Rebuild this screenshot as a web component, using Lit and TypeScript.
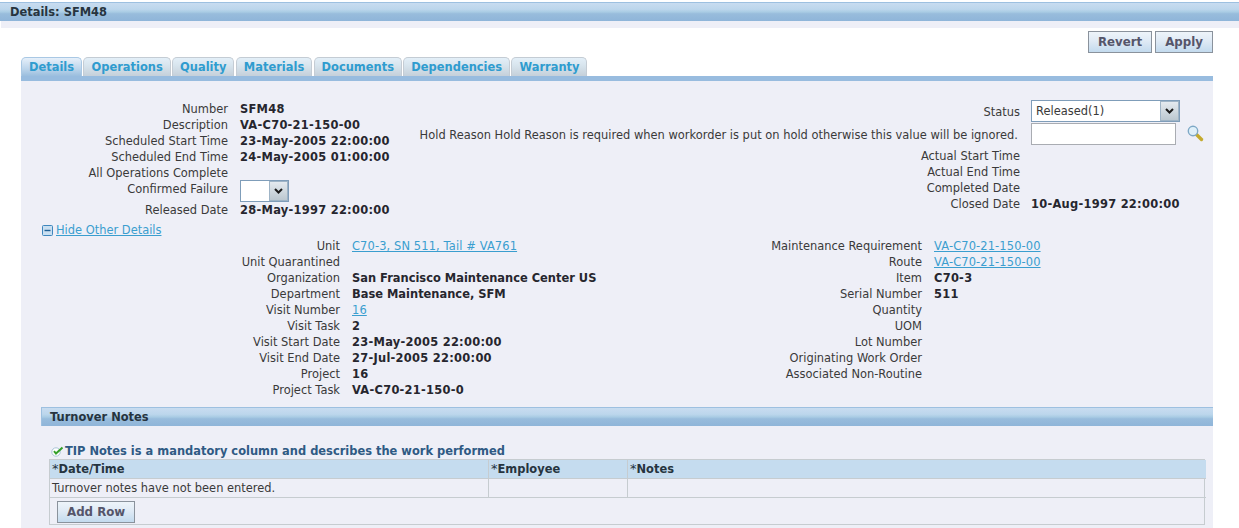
import { LitElement, html, css } from 'lit';
import { customElement } from 'lit/decorators.js';

const tabs = ['Details', 'Operations', 'Quality', 'Materials', 'Documents', 'Dependencies', 'Warranty'];

type Row = [string, string, ('link' | 'plain')?];

const topLeft: Row[] = [
  ['Number', 'SFM48'],
  ['Description', 'VA-C70-21-150-00'],
  ['Scheduled Start Time', '23-May-2005 22:00:00'],
  ['Scheduled End Time', '24-May-2005 01:00:00'],
  ['All Operations Complete', ''],
];

const otherLeft: Row[] = [
  ['Unit', 'C70-3, SN 511, Tail # VA761', 'link'],
  ['Unit Quarantined', ''],
  ['Organization', 'San Francisco Maintenance Center US'],
  ['Department', 'Base Maintenance, SFM'],
  ['Visit Number', '16', 'link'],
  ['Visit Task', '2'],
  ['Visit Start Date', '23-May-2005 22:00:00'],
  ['Visit End Date', '27-Jul-2005 22:00:00'],
  ['Project', '16'],
  ['Project Task', 'VA-C70-21-150-0'],
];

const otherRight: Row[] = [
  ['Maintenance Requirement', 'VA-C70-21-150-00', 'link'],
  ['Route', 'VA-C70-21-150-00', 'link'],
  ['Item', 'C70-3'],
  ['Serial Number', '511'],
  ['Quantity', ''],
  ['UOM', ''],
  ['Lot Number', ''],
  ['Originating Work Order', ''],
  ['Associated Non-Routine', ''],
];

const chevron = html`<svg class="chev" viewBox="0 0 9 6" width="9" height="6"><path d="M1 1l3.5 3.5L8 1" fill="none" stroke="#1c1c1c" stroke-width="2"/></svg>`;

@customElement('app-root')
class AppRoot extends LitElement {
  private _row(r: Row) {
    const num = /\d/.test(r[1]) ? 'num' : '';
    return html`
      <div class="lbl">${r[0]}</div>
      ${r[2] === 'link'
        ? html`<div class="val ${num}"><a>${r[1]}</a></div>`
        : html`<div class="val ${num}">${r[1]}</div>`}
    `;
  }

  render() {
    return html`
      <div class="title">Details: SFM48</div>
      <div class="band"></div>
      <div class="actions">
        <button class="btn">Revert</button>
        <button class="btn">Apply</button>
      </div>
      <div class="tabs">
        ${tabs.map((t, i) => html`<div class="tab ${i == 0 ? 'on' : ''}">${t}</div>`)}
      </div>
      <div class="panel">
        <div class="top">
          <div class="form left-top">
            ${topLeft.map((r) => this._row(r))}
            <div class="lbl">Confirmed Failure</div>
            <div class="val"><div class="select small"><span></span><i>${chevron}</i></div></div>
            ${this._row(['Released Date', '28-May-1997 22:00:00'])}
          </div>
          <div class="form right-top">
            <div class="lbl fld">Status</div>
            <div class="val"><div class="select status"><span>Released(1)</span><i>${chevron}</i></div></div>
            <div class="lbl fld hint">Hold Reason Hold Reason is required when workorder is put on hold otherwise this value will be ignored.</div>
            <div class="val hold">
              <div class="input"></div>
              <svg width="17" height="17" viewBox="0 0 17 17">
                <path d="M9.5 9.5l5 5" stroke="#c4aa2e" stroke-width="3.4" stroke-linecap="round"/>
                <circle cx="6" cy="6" r="4.7" fill="#dff0fa" stroke="#7ea8c6" stroke-width="1.4"/>
              </svg>
            </div>
            ${this._row(['Actual Start Time', ''])}
            ${this._row(['Actual End Time', ''])}
            ${this._row(['Completed Date', ''])}
            ${this._row(['Closed Date', '10-Aug-1997 22:00:00'])}
          </div>
        </div>
        <div class="toggle">
          <svg width="11" height="11" viewBox="0 0 11 11">
            <rect x=".5" y=".5" width="10" height="10" rx="1" fill="#c9dff1" stroke="#3f86bd"/>
            <path d="M2.5 5.5h6" stroke="#1f5f94" stroke-width="1.4"/>
          </svg>
          <a>Hide Other Details</a>
        </div>
        <div class="other">
          <div class="form other-left">${otherLeft.map((r) => this._row(r))}</div>
          <div class="form other-right">${otherRight.map((r) => this._row(r))}</div>
        </div>
        <div class="sub">Turnover Notes</div>
        <div class="tip">
          <svg width="13" height="11" viewBox="0 0 13 11">
            <circle cx="5" cy="6" r="4.2" fill="#fff" stroke="#a9c4d6"/>
            <path d="M3 5.2l2 2.4L11.5 1.5" fill="none" stroke="#35a02a" stroke-width="2"/>
          </svg>
          <span>TIP Notes is a mandatory column and describes the work performed</span>
        </div>
        <div class="table">
          <div class="th"><sup>*</sup>Date/Time</div>
          <div class="th"><sup>*</sup>Employee</div>
          <div class="th last"><sup>*</sup>Notes</div>
          <div class="td">Turnover notes have not been entered.</div>
          <div class="td"></div>
          <div class="td last"></div>
          <div class="foot"><button class="btn">Add Row</button></div>
        </div>
      </div>
    `;
  }

  static styles = css`
    :host {
      display: block;
      height: 528px;
      overflow: hidden;
      background: #fff;
      font-family: 'DejaVu Sans', sans-serif;
      font-size: 11.45px;
      color: #3a3a3a;
    }
    .title {
      margin-top: 2px;
      height: 19px;
      box-sizing: border-box;
      padding-left: 10px;
      line-height: 18px;
      font-weight: bold;
      color: #27343f;
      border-top: 1px solid #9dc0e0;
      background: linear-gradient(#c8dcf0 0, #bcd6ec 35%, #a9cce4 50%, #98bcdc 60%, #8fb5d9 100%);
    }
    .band {
      height: 7px;
      margin-left: 1px;
      background: #eeeff7;
    }
    .actions {
      display: flex;
      justify-content: flex-end;
      gap: 3px;
      padding: 3px 26px 0 0;
      height: 29px;
      box-sizing: border-box;
    }
    .btn {
      height: 22px;
      padding: 0 9px;
      font-family: inherit;
      font-size: 11.8px;
      font-weight: bold;
      color: #55556a;
      border: 1px solid #8a929c;
      background: linear-gradient(#eef4fa 0, #dfeaf5 45%, #c3daee 100%);
    }
    .tabs {
      display: flex;
      gap: 1.4px;
      margin-left: 21px;
      height: 19px;
    }
    .tab {
      padding: 0 7px;
      line-height: 19px;
      font-weight: bold;
      color: #2f9ccf;
      border: 1px solid #c4ccd4;
      border-bottom: none;
      border-radius: 5px 5px 0 0;
      background: linear-gradient(#e3eff8 0, #d8e5ee 40%, #c5d0da 100%);
    }
    .tab.on {
      border-color: #a9c8e4;
      background: linear-gradient(#e6f0fa 0, #bcd5eb 60%, #9bbede 100%);
    }
    .panel {
      margin: 0 26px 0 21px;
      padding: 19px 0 3px;
      border-top: 5px solid #98bcdf;
      background: #eeeff7;
    }
    .top {
      display: flex;
      justify-content: space-between;
      height: 122px;
    }
    .form {
      display: grid;
      align-content: start;
      grid-auto-rows: 16px;
      column-gap: 12px;
      line-height: 16px;
    }
    .lbl {
      text-align: right;
      white-space: nowrap;
    }
    .val {
      font-weight: bold;
      color: #26262e;
      white-space: nowrap;
    }
    .val.num {
      letter-spacing: 0.27px;
    }
    a {
      font-weight: normal;
      color: #3a9ecf;
      text-decoration: underline;
    }
    .val.num a {
      letter-spacing: 0.12px;
    }
    .left-top {
      grid-template-columns: 207px auto;
      grid-template-rows: repeat(5, 16px) 21px 18px;
      padding-top: 1px;
    }
    .right-top {
      grid-template-columns: auto 182px;
      grid-template-rows: 23px 25px repeat(4, 16px);
      column-gap: 11px;
    }
    .fld {
      line-height: 24px;
    }
    .hint {
      padding-right: 2px;
    }
    .select {
      display: flex;
      box-sizing: border-box;
      height: 22px;
      background: #fff;
      border: 1px solid #7f9db9;
      font-weight: normal;
      line-height: 21px;
      color: #3a3a3a;
    }
    .select span {
      flex: 1;
      padding-left: 4px;
    }
    .select i {
      display: flex;
      align-items: center;
      justify-content: center;
      width: 17px;
      border: 1px solid #fff;
      outline: 1px solid #9fb4c6;
      outline-offset: -1px;
      background: linear-gradient(#e4eaef, #bcc8d0);
    }
    .status {
      width: 149px;
    }
    .small {
      width: 49px;
      margin-top: -1px;
    }
    .hold {
      display: flex;
      gap: 11px;
    }
    .input {
      box-sizing: border-box;
      width: 145px;
      height: 22px;
      background: #fff;
      border: 1px solid #a9acb2;
    }
    .hold svg {
      margin-top: 2px;
    }
    .toggle {
      display: flex;
      align-items: center;
      gap: 3px;
      height: 16px;
      margin-left: 21px;
    }
    .other {
      display: flex;
      height: 169px;
    }
    .other-left {
      grid-template-columns: 319px auto;
      width: 582px;
    }
    .other-right {
      grid-template-columns: 319px auto;
    }
    .sub {
      margin-left: 20px;
      height: 19px;
      box-sizing: border-box;
      padding-left: 8px;
      line-height: 18px;
      font-weight: bold;
      color: #27343f;
      border: 1px solid #9dc0e0;
      border-width: 1px 0 0 1px;
      background: linear-gradient(#c8dcf0 0, #bcd6ec 35%, #a9cce4 50%, #98bcdc 60%, #8fb5d9 100%);
    }
    .tip {
      display: flex;
      align-items: center;
      gap: 1px;
      margin: 17px 0 0 30px;
      height: 16px;
      font-weight: bold;
      color: #2f5a84;
    }
    .table {
      display: grid;
      grid-template-columns: 439px 139px 578px;
      margin: 0 8px 0 28px;
      border: 1px solid #c6ccd0;
    }
    .th {
      height: 18px;
      line-height: 19px;
      padding-left: 2px;
      font-weight: bold;
      color: #26343f;
      background: #c5dcef;
      border-right: 1px solid #c6ccd0;
      border-bottom: 1px solid #c6ccd0;
    }
    .td {
      height: 18px;
      line-height: 19px;
      padding-left: 2px;
      border-right: 1px solid #c6ccd0;
      border-bottom: 1px solid #c6ccd0;
    }
    .last {
      border-right: none;
    }
    sup {
      font-weight: normal;
      font-size: 13px;
      line-height: 0;
      vertical-align: baseline;
    }
    .foot {
      grid-column: 1 / 4;
      padding: 3px 0 3px 7px;
      height: 20px;
    }
  `;
}
